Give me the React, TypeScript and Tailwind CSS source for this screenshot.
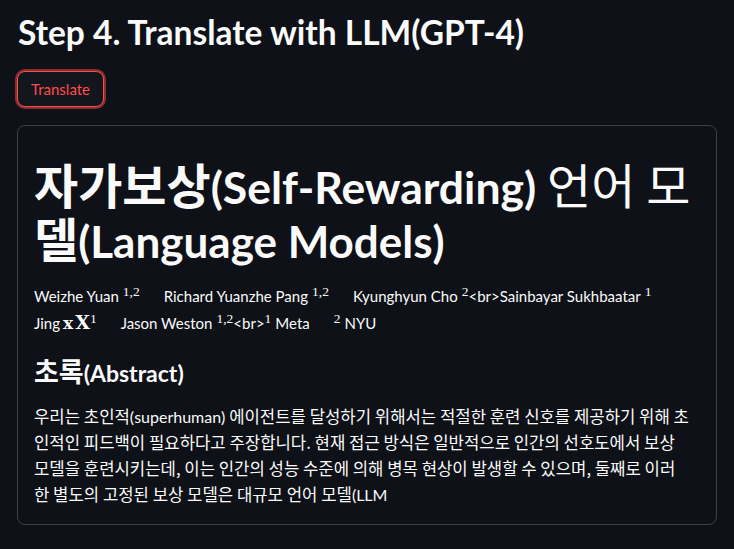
import React from "react";

const ko = "font-['Noto_Sans_CJK_KR',sans-serif]";
const en = "font-['Lato','Noto_Sans_CJK_KR',sans-serif]";
const serif = "font-['Liberation_Serif','DejaVu_Serif',serif]";
const mathBold = "font-['DejaVu_Serif','Liberation_Serif',serif] font-bold";

function Sup({ children, gap = true }: { children: React.ReactNode; gap?: boolean }) {
  return (
    <span className={`${serif} ${gap ? "ml-[4px]" : ""} align-super text-[13.5px] leading-none`}>
      {children}
    </span>
  );
}

function Latin({ size, children }: { size: string; children: React.ReactNode }) {
  return <span className={`${en} ${size} leading-none`}>{children}</span>;
}

function Author({ children }: { children: React.ReactNode }) {
  return <span className="whitespace-nowrap">{children}</span>;
}

export default function App() {
  return (
    <div className={`${ko} min-h-[549px] w-[734px] bg-[#0e1117] text-[#fafafa]`}>
      <div className="flex flex-col px-[17px] pt-[8px]">
        <h2 className={`${en} pl-[1px] text-[33.5px] font-bold leading-[48px]`}>
          Step 4. Translate with LLM(GPT-4)
        </h2>

        <div className="mt-[15px] flex">
          <button
            className={`${en} h-[36px] rounded-[8px] border border-[#ff4b4b] bg-[#13161d] px-[13px] text-[15px] leading-none text-[#ff4b4b] shadow-[0_0_0_2px_rgba(255,75,75,0.5)]`}
          >
            Translate
          </button>
        </div>

        <div className="mt-[18px] flex flex-col rounded-[8px] border border-[rgba(250,250,250,0.2)] px-[16px] pb-[17px] pt-[30px]">
          <h1 className="text-[48px] font-bold leading-[54px]">
            자가보상<Latin size="text-[44.5px]">(Self-Rewarding)</Latin>{" "}
            <span className="font-normal">언어 모</span>델
            <Latin size="text-[44px]">(Language Models)</Latin>
          </h1>

          <div className={`${en} mt-[19px] flex flex-col text-[15px] leading-[26px]`}>
            <div className="flex items-baseline gap-x-[24px]">
              <Author>
                Weizhe Yuan<Sup>1,2</Sup>
              </Author>
              <Author>
                Richard Yuanzhe Pang<Sup>1,2</Sup>
              </Author>
              <Author>
                Kyunghyun Cho<Sup>2</Sup>
                {"<br>Sainbayar Sukhbaatar"}
                <Sup>1</Sup>
              </Author>
            </div>
            <div className="flex items-baseline gap-x-[24px]">
              <Author>
                Jing
                <span className={`${mathBold} ml-[3px] text-[17px]`}>x</span>
                <span className={`${mathBold} ml-[2px] text-[19px]`}>X</span>
                <Sup gap={false}>1</Sup>
              </Author>
              <Author>
                Jason Weston<Sup>1,2</Sup>
                {"<br>"}
                <Sup gap={false}>1</Sup>
                <span className="ml-[4px]">Meta</span>
              </Author>
              <Author>
                <Sup gap={false}>2</Sup>
                <span className="ml-[4px]">NYU</span>
              </Author>
            </div>
          </div>

          <h3 className="mt-[17px] text-[27px] font-bold leading-[36px]">
            초록<Latin size="text-[23px]">(Abstract)</Latin>
          </h3>

          <p className="mt-[14px] text-[16.7px] leading-[26px]">
            우리는 초인적<Latin size="text-[16px]">(superhuman)</Latin> 에이전트를 달성하기 위해서는 적절한 훈련
            신호를 제공하기 위해 초<br />
            인적인 피드백이 필요하다고 주장합니다. 현재 접근 방식은 일반적으로 인간의 선호도에서 보상<br />
            모델을 훈련시키는데, 이는 인간의 성능 수준에 의해 병목 현상이 발생할 수 있으며, 둘째로 이러<br />
            한 별도의 고정된 보상 모델은 대규모 언어 모델<Latin size="text-[16px]">(LLM</Latin>
          </p>
        </div>
      </div>
    </div>
  );
}
